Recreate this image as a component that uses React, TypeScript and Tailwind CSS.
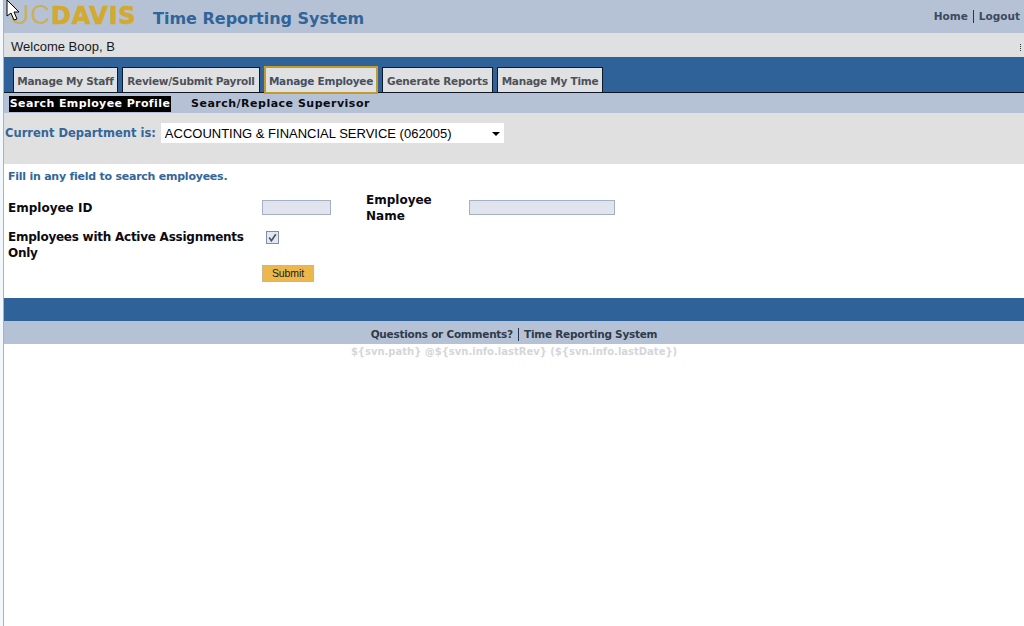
const verdana = "font-['DejaVu_Sans',sans-serif]";

function Tab({ label, w, active }: { label: string; w: string; active?: boolean }) {
  return (
    <div
      className={`${w} flex items-center justify-center whitespace-nowrap bg-[#e0e1e3] pt-[3px] text-[10.5px] font-bold tracking-[-0.25px] text-[#4d5157] ${
        active
          ? "h-[28px] border-2 border-[#c49a2c] bg-[#c6cdd8] text-[#45505f] mb-[-2px]"
          : "h-[25px] border border-b-0 border-[#0c1a2b]"
      }`}
    >
      {label}
    </div>
  );
}

export default function App() {
  return (
    <div className={`relative flex h-[626px] w-[1024px] overflow-hidden bg-white ${verdana}`}>
      <div className="w-[3px] shrink-0 border-r border-[#a9b2bd] bg-[#f3f8fc] box-content" />
      <div className="min-w-0 flex-1">
        <header className="flex h-[33px] items-center justify-between bg-[#b5c2d5]">
          <div className="flex items-center pl-[6px]">
            <div className="flex w-[143px] items-baseline font-['Liberation_Sans',sans-serif] text-[#d3a92e] leading-[28px] mt-[-3px]">
              <span className="text-[27px] font-normal tracking-[1px] opacity-70">UC</span>
              <span className="font-['DejaVu_Sans',sans-serif] text-[24px] font-bold tracking-[0.75px] [-webkit-text-stroke:0.6px_#d3a92e]">DAVIS</span>
            </div>
            <h1 className="mt-[5px] text-[16px] font-bold text-[#316498]">Time Reporting System</h1>
          </div>
          <div className="flex items-center pr-[4px] text-[10.5px] font-bold text-[#3b4a5f]">
            <span>Home</span>
            <span className="mx-[5px] h-[13px] w-px bg-[#26384e]" />
            <span>Logout</span>
          </div>
        </header>

        <div className="flex h-[24px] items-center justify-between bg-[#dfe0e2] pl-[7px] pr-[3px] pt-[4px] font-['Liberation_Sans',sans-serif] text-[13px] text-[#17191c]">
          <span>Welcome Boop, B</span>
          <span className="h-[7px] w-px border-l border-dotted border-[#333]" />
        </div>

        <nav className="flex h-[36px] items-end gap-[4px] border-b border-[#0d1622] bg-[#2f6299] pl-[9px]">
          <Tab label="Manage My Staff" w="w-[105px]" />
          <Tab label="Review/Submit Payroll" w="w-[138px]" />
          <Tab label="Manage Employee" w="w-[114px]" active />
          <Tab label="Generate Reports" w="w-[111px]" />
          <Tab label="Manage My Time" w="w-[106px]" />
        </nav>

        <div className="flex h-[20px] items-center bg-[#b5c2d5] pl-[5px] pt-[2px] text-[11px] font-bold tracking-[0.5px] text-[#0b0b10]">
          <span className="flex h-[16px] w-[162px] items-center justify-center whitespace-nowrap bg-black pt-px tracking-[0.4px] text-white">Search Employee Profile</span>
          <span className="ml-[20px] pt-px">Search/Replace Supervisor</span>
        </div>

        <div className="flex h-[51px] items-start bg-[#e0e0e0] pl-px pt-[10px]">
          <span className="mt-[2px] text-[11.5px] font-bold text-[#336699]">Current Department is:</span>
          <div className="ml-[5px] flex h-[20px] w-[343px] items-center justify-between bg-white pl-[4px] pr-[4px] pt-px font-['Liberation_Sans',sans-serif] text-[13px] text-black">
            <span>ACCOUNTING &amp; FINANCIAL SERVICE (062005)</span>
            <span className="h-0 w-0 border-x-[4px] border-t-[4px] border-x-transparent border-t-black" />
          </div>
        </div>

        <main className="h-[134px] pl-[4px] pt-[6px]">
          <p className="text-[11px] font-bold leading-[14px] tracking-[-0.24px] text-[#336699]">Fill in any field to search employees.</p>
          <div className="mt-[8px] grid grid-cols-[254px_104px_1fr] items-center text-[12px] font-bold leading-[16px] text-[#0b0b10]">
            <div className="h-[32px] leading-[32px]">Employee ID</div>
            <div className="flex items-center">
              <div className="mt-[-2px] h-[15px] w-[69px] border border-[#a5b0c4] bg-[#dfe4ef]" />
            </div>
            <div className="flex items-center">
              <div className="w-[103px]">Employee<br />Name</div>
              <div className="mt-[-2px] h-[15px] w-[146px] border border-[#a5b0c4] bg-[#dfe4ef]" />
            </div>
            <div className="mt-[5px] w-[250px] tracking-[-0.25px]">Employees with Active Assignments Only</div>
            <div className="mt-[-11px] pl-[4px]">
              <div className="flex h-[13px] w-[13px] items-center justify-center border border-[#7f8fa8] bg-[#e4e7ee]">
                <svg viewBox="0 0 10 10" className="h-[11px] w-[11px]">
                  <path d="M2 5l2 3 4-6" fill="none" stroke="#4a5568" strokeWidth="1.5" />
                </svg>
              </div>
            </div>
            <div />
          </div>
          <div className="ml-[254px] mt-[4px] flex h-[17px] w-[52px] items-center justify-center border border-[#c9b88a] bg-[#ecb84e] font-['Liberation_Sans',sans-serif] text-[10.5px] tracking-[-0.1px] text-[#1c1a12]">
            Submit
          </div>
        </main>

        <div className="h-[23px] bg-[#2f6299]" />
        <div className="flex h-[23px] items-center justify-center bg-[#b5c2d5] pt-[4px] text-[10.5px] font-bold tracking-[-0.25px] text-[#2f3b4b]">
          <span>Questions or Comments?</span>
          <span className="mx-[5px] h-[13px] w-px bg-[#26384e]" />
          <span>Time Reporting System</span>
        </div>
        <p className="mt-px text-center text-[10px] font-bold leading-[13px] text-[#d4d6d9]">
          {"${svn.path} @${svn.info.lastRev} (${svn.info.lastDate})"}
        </p>
      </div>

      <svg viewBox="0 0 14 22" className="absolute left-[6px] top-0 h-[22px] w-[14px]">
        <path d="M1 0v16l4-3 3 7 3-1-3-7h5z" fill="#fff" stroke="#000" strokeWidth="1" />
      </svg>
    </div>
  );
}
